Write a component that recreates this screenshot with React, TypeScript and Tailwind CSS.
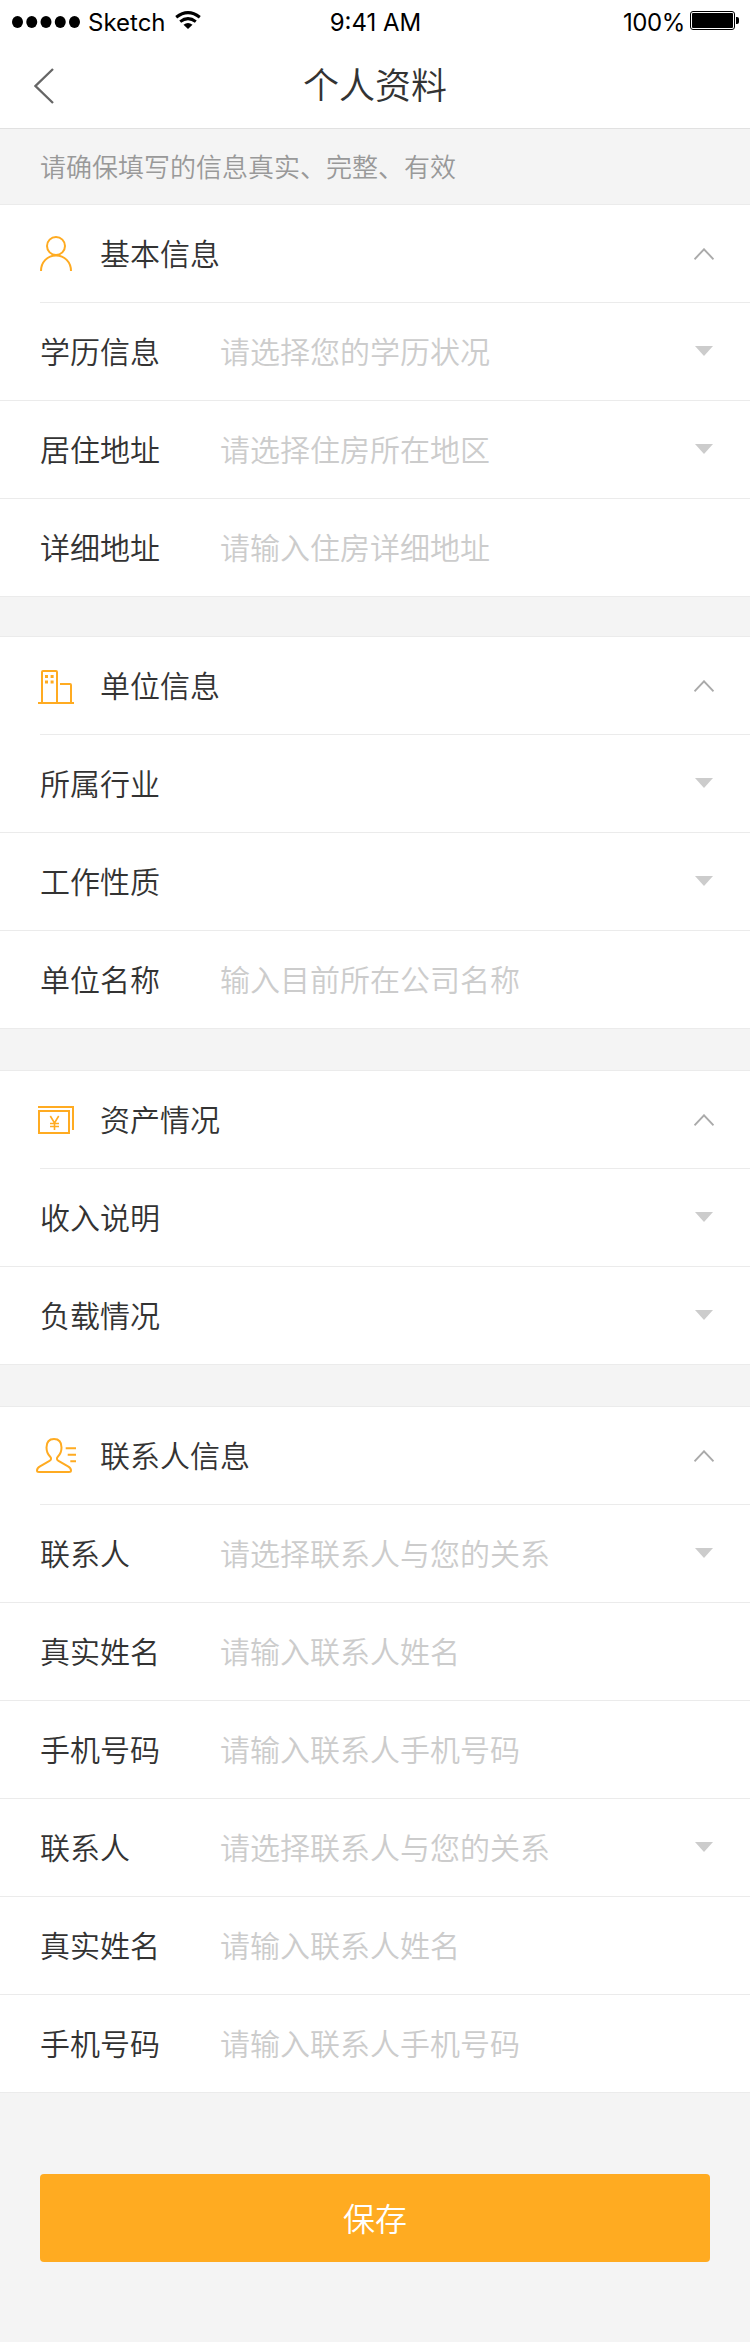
import type { ReactNode } from 'react';

type Field = { label: string; placeholder?: string; select?: boolean };
type Group = { title: string; icon: ReactNode; fields: Field[]; gap: string };

function PersonIcon() {
  return (
    <svg className="h-9 w-9" viewBox="0 0 36 36" fill="none" stroke="#ffab21" strokeWidth="2">
      <circle cx="16" cy="10" r="9" />
      <path d="M1 35C1 26 7.500 19.500 16 19.500S31 26 31 35" />
    </svg>
  );
}

function BuildingIcon() {
  return (
    <svg className="-ml-0.5 h-9 w-[38px]" viewBox="0 0 38 36" fill="none" stroke="#ffab21" strokeWidth="2">
      <path d="M0 35h36M4 35V4q0-1 1-1h13q1 0 1 1v31M22 16h10q1 0 1 1v18" />
      <path d="M7 8.500h3M12.600 8.500h3M7 14h3M12.600 14h3" strokeWidth="2.800" />
    </svg>
  );
}

function MoneyIcon() {
  return (
    <svg className="-ml-0.5 h-7 w-[38px]" viewBox="0 0 38 28" fill="none" stroke="#ffab21" strokeWidth="2">
      <path d="M0 1h35v23M1 5h30v22H1z" />
      <path d="M12.300 10l4.200 7 4.200-7M12 17.500h9M12 20.500h9M16.500 17v7" strokeWidth="1.600" />
    </svg>
  );
}

function ContactIcon() {
  return (
    <svg className="-ml-1 h-9 w-10" viewBox="0 0 40 36" fill="none" stroke="#ffab21" strokeWidth="2">
      <path d="M18 1c-5 0-7.500 3-7.500 8.500 0 4 1 6.500 3.500 9 1.500 1.500 1.500 3.200-.5 4.300L4 28.300C1.500 29.700 1 30.700 1 32.500 1 33.500 1.500 34 3 34h30c1.500 0 2-.5 2-1.500 0-1.800-.5-2.800-3-4.200l-9.500-5.500c-2-1.100-2-2.800-.5-4.300 2.500-2.500 3.500-5 3.500-9C25.500 4 23 1 18 1z" />
      <path d="M29.700 10.300H40M31.700 16.800H40M34.300 23.300H40" />
    </svg>
  );
}

const groups: Group[] = [
  {
    title: '基本信息',
    icon: <PersonIcon />,
    gap: 'mb-[39px]',
    fields: [
      { label: '学历信息', placeholder: '请选择您的学历状况', select: true },
      { label: '居住地址', placeholder: '请选择住房所在地区', select: true },
      { label: '详细地址', placeholder: '请输入住房详细地址' },
    ],
  },
  {
    title: '单位信息',
    icon: <BuildingIcon />,
    gap: 'mb-[41px]',
    fields: [
      { label: '所属行业', select: true },
      { label: '工作性质', select: true },
      { label: '单位名称', placeholder: '输入目前所在公司名称' },
    ],
  },
  {
    title: '资产情况',
    icon: <MoneyIcon />,
    gap: 'mb-[41px]',
    fields: [
      { label: '收入说明', select: true },
      { label: '负载情况', select: true },
    ],
  },
  {
    title: '联系人信息',
    icon: <ContactIcon />,
    gap: 'mb-[81px]',
    fields: [
      { label: '联系人', placeholder: '请选择联系人与您的关系', select: true },
      { label: '真实姓名', placeholder: '请输入联系人姓名' },
      { label: '手机号码', placeholder: '请输入联系人手机号码' },
      { label: '联系人', placeholder: '请选择联系人与您的关系', select: true },
      { label: '真实姓名', placeholder: '请输入联系人姓名' },
      { label: '手机号码', placeholder: '请输入联系人手机号码' },
    ],
  },
];

function StatusBar() {
  return (
    <div className="grid h-11 grid-cols-3 items-center pl-3 pr-[11px] font-['Inter',sans-serif] text-2xl font-normal text-black">
      <div className="flex items-center">
        <svg className="h-3 w-[68px]" viewBox="0 0 68 12">
          {[5.5, 19.75, 34, 48.25, 62.5].map((x) => (
            <ellipse key={x} cx={x} cy="6" rx="5.500" ry="6" />
          ))}
        </svg>
        <span className="ml-2 w-[79px] pt-0.5">Sketch</span>
        <svg className="mb-1 ml-2 h-[18px] w-[26px]" viewBox="0 0 26 18" fill="none" stroke="#000" strokeWidth="3">
          <path d="M1.200 6.200Q13-3 24.800 6.200M5.200 10.600q7.800-6 15.600 0" />
          <path d="M8.500 13.700q4.500-3.400 9 0L13 18z" fill="#000" stroke="none" />
        </svg>
      </div>
      <div className="pt-0.5 text-center">9:41 AM</div>
      <div className="flex items-center justify-end">
        <span className="pt-0.5 tracking-[-0.4px]">100%</span>
        <svg className="mb-[3px] ml-[5px] h-[19px] w-[49px]" viewBox="0 0 49 19">
          <rect x=".5" y=".5" width="44" height="18" rx="2.500" fill="none" stroke="#000" />
          <rect x="2" y="2" width="41" height="15" rx="1" />
          <path d="M46 6h1q2 0 2 2v3q0 2-2 2h-1z" />
        </svg>
      </div>
    </div>
  );
}

function GroupHeader({ title, icon }: { title: string; icon: ReactNode }) {
  return (
    <div className="ml-10 flex h-[98px] items-center border-b border-[#ebebeb] pr-9">
      <div className="w-[60px] pt-px">{icon}</div>
      <span className="flex-1 pb-1 text-[30px] leading-[42px]">{title}</span>
      <svg className="mt-px h-3 w-5" viewBox="0 0 20 12" fill="none" stroke="#aaa" strokeWidth="1.900">
        <path d="M.5 11.300L10 1.300l9.500 10" />
      </svg>
    </div>
  );
}

function FieldRow({ label, placeholder, select }: Field) {
  return (
    <div className="flex h-[98px] items-center border-b border-[#ebebeb] pl-10 pr-[37px] text-[30px] leading-[42px]">
      <span className="w-[180px] pb-1">{label}</span>
      <span className="flex-1 pb-1 text-[#ccc]">{placeholder}</span>
      {select && (
        <svg className="mb-px h-2.5 w-[18px]" viewBox="0 0 18 10" fill="#ccc">
          <path d="M0 0h18L9 10z" />
        </svg>
      )}
    </div>
  );
}

export default function App() {
  return (
    <div className="h-[2342px] w-[750px] bg-[#f4f4f4] font-['Noto_Sans_CJK_SC',sans-serif] font-[350] text-[#333]">
      <header className="h-[129px] border-b border-[#e1e1e1] bg-white">
        <StatusBar />
        <div className="grid h-[84px] grid-cols-3 items-center">
          <svg className="ml-[34px] h-9 w-5" viewBox="0 0 20 36" fill="none" stroke="#666" strokeWidth="2.300">
            <path d="M19 1L1.500 18 19 35" />
          </svg>
          <h1 className="pb-1.5 text-center text-4xl font-[350]">个人资料</h1>
        </div>
      </header>
      <p className="flex h-[75px] items-center pb-0.5 pl-10 text-[26px] text-[#999]">请确保填写的信息真实、完整、有效</p>
      {groups.map((group) => (
        <section key={group.title} className={`border-t border-[#ebebeb] bg-white ${group.gap}`}>
          <GroupHeader title={group.title} icon={group.icon} />
          {group.fields.map((field, i) => (
            <FieldRow key={i} {...field} />
          ))}
        </section>
      ))}
      <button className="mx-10 flex h-[88px] w-[670px] items-center justify-center rounded bg-[#ffab21] pb-0.5 text-[32px] text-white">
        保存
      </button>
    </div>
  );
}
